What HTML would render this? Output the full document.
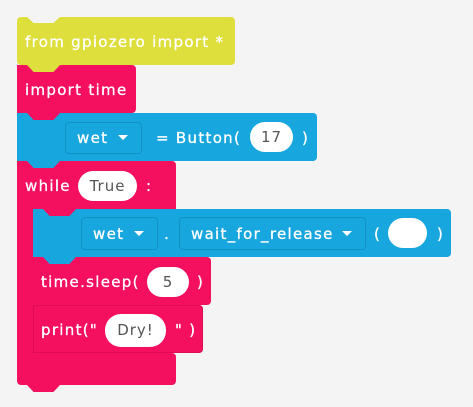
<!DOCTYPE html>
<html><head><style>
body{margin:0;width:473px;height:407px;background:#f4f4f4;overflow:hidden;position:relative;font-family:"DejaVu Sans",sans-serif;}
.b{position:absolute;border-radius:4px;}
.y{background:#dede3c;}
.p{background:#f50f5f;}
.bl{background:#18a6df;}
.t{position:absolute;color:#fff;font-size:15px;line-height:20px;white-space:nowrap;letter-spacing:1.3px;-webkit-text-stroke:0.3px #fff;}
.f{position:absolute;border:1px solid #1290c4;border-radius:4px;background:#18a6df;}
.pill{position:absolute;background:#fff;border-radius:16px;color:#555;font-size:15px;text-align:center;line-height:30px;letter-spacing:1px;}
.tab{position:absolute;width:33px;height:7px;clip-path:polygon(0 0,100% 0,80% 100%,20% 100%);}
.notch{position:absolute;width:33px;height:6px;background:#f4f4f4;clip-path:polygon(0 0,100% 0,80% 100%,20% 100%);}
.tri{position:absolute;width:0;height:0;border-left:5px solid transparent;border-right:5px solid transparent;border-top:5px solid #fff;}
</style></head><body>
<div class="b y" style="left:17px;top:17px;width:218px;height:48px"></div>
<div class="notch" style="left:27px;top:17px"></div>
<div class="t" style="left:25px;top:32px">from gpiozero import *</div>

<div class="b p" style="left:17px;top:65px;width:119px;height:48px;border-radius:0 4px 4px 0"></div>
<div class="tab y" style="left:27px;top:65px"></div>
<div class="t" style="left:25px;top:80px">import time</div>

<div class="b bl" style="left:17px;top:113px;width:300px;height:48px;border-radius:0 4px 4px 0"></div>
<div class="tab p" style="left:27px;top:113px"></div>
<div class="f" style="left:65px;top:122px;width:75px;height:30px"></div>
<div class="t" style="left:77px;top:128px">wet</div><div class="tri" style="left:118px;top:135px"></div>
<div class="t" style="left:156px;top:128px">= Button(</div>
<div class="pill" style="left:250px;top:122px;width:43px;height:30px">17</div>
<div class="t" style="left:302px;top:128px">)</div>

<div class="b p" style="left:17px;top:161px;width:159px;height:48px;border-radius:0 4px 0 0"></div>
<div class="b p" style="left:17px;top:200px;width:16px;height:170px;border-radius:0"></div>
<div class="b p" style="left:17px;top:353px;width:159px;height:32px;border-radius:0 4px 4px 4px"></div>
<div class="tab p" style="left:27px;top:385px"></div>
<div class="tab bl" style="left:27px;top:161px"></div>
<div class="t" style="left:25px;top:176px">while</div>
<div class="pill" style="left:78px;top:171px;width:59px;height:30px">True</div>
<div class="t" style="left:146px;top:176px">:</div>

<div class="b bl" style="left:33px;top:209px;width:418px;height:48px;border-radius:0 4px 4px 0"></div>
<div class="tab p" style="left:43px;top:209px"></div>
<div class="f" style="left:81px;top:217px;width:75px;height:31px"></div>
<div class="t" style="left:93px;top:224px">wet</div><div class="tri" style="left:134px;top:231px"></div>
<div class="t" style="left:164px;top:224px">.</div>
<div class="f" style="left:179px;top:217px;width:185px;height:31px"></div>
<div class="t" style="left:191px;top:224px">wait_for_release</div><div class="tri" style="left:342px;top:231px"></div>
<div class="t" style="left:374px;top:224px">(</div>
<div class="pill" style="left:388px;top:218px;width:39px;height:30px"></div>
<div class="t" style="left:437px;top:224px">)</div>

<div class="b p" style="left:33px;top:257px;width:178px;height:48px;border-radius:0 4px 4px 0"></div>
<div class="tab bl" style="left:43px;top:257px"></div>
<div class="t" style="left:41px;top:272px">time.sleep(</div>
<div class="pill" style="left:147px;top:267px;width:42px;height:30px">5</div>
<div class="t" style="left:197px;top:272px">)</div>

<div class="b p" style="left:33px;top:305px;width:170px;height:48px;border-radius:0 4px 4px 0;box-shadow:inset 0 0 0 1px rgba(150,0,50,.25)"></div>
<div class="t" style="left:41px;top:320px">print("</div>
<div class="pill" style="left:105px;top:314px;width:61px;height:33px;line-height:33px">Dry!</div>
<div class="t" style="left:175px;top:320px">" )</div>
</body></html>
